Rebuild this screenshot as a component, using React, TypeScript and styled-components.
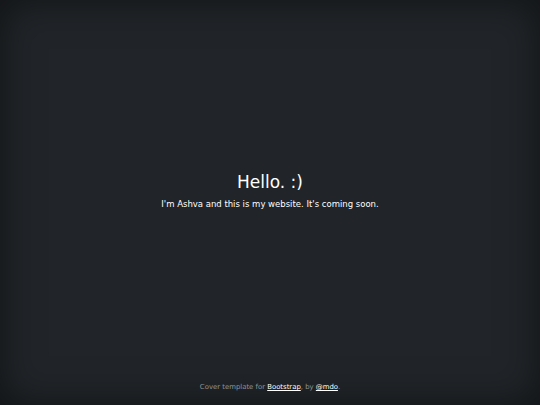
import styled, { createGlobalStyle } from 'styled-components';

const GlobalStyle = createGlobalStyle`
  html, body {
    margin: 0;
    height: 100%;
  }
  body {
    background-color: #212529;
    font-family: "DejaVu Sans", sans-serif;
  }
  #root {
    height: 100%;
  }
`;

const Wrapper = styled.div`
  height: 100%;
  display: flex;
  flex-direction: column;
  box-shadow: inset 0 0 40px rgba(0, 0, 0, 0.5);
  color: #fff;
  text-align: center;
`;

const Main = styled.main`
  flex: 1;
  display: flex;
  flex-direction: column;
  justify-content: center;
  align-items: center;
`;

const Heading = styled.h1`
  margin: 0 0 5px;
  font-size: 17px;
  font-weight: 400;
  line-height: 1.2;
`;

const Lead = styled.p`
  margin: 0;
  font-size: 8.5px;
  line-height: 1.5;
`;

const Footer = styled.footer`
  padding-bottom: 14px;
  font-size: 6.9px;
  color: rgba(255, 255, 255, 0.5);
`;

const Link = styled.a`
  color: #fff;
  text-decoration: underline;
`;

export default function App() {
  return (
    <>
      <GlobalStyle />
      <Wrapper>
        <Main>
          <Heading>Hello. :)</Heading>
          <Lead>I'm Ashva and this is my website. It's coming soon.</Lead>
        </Main>
        <Footer>
          Cover template for <Link href="#">Bootstrap</Link>, by{' '}
          <Link href="#">@mdo</Link>.
        </Footer>
      </Wrapper>
    </>
  );
}
